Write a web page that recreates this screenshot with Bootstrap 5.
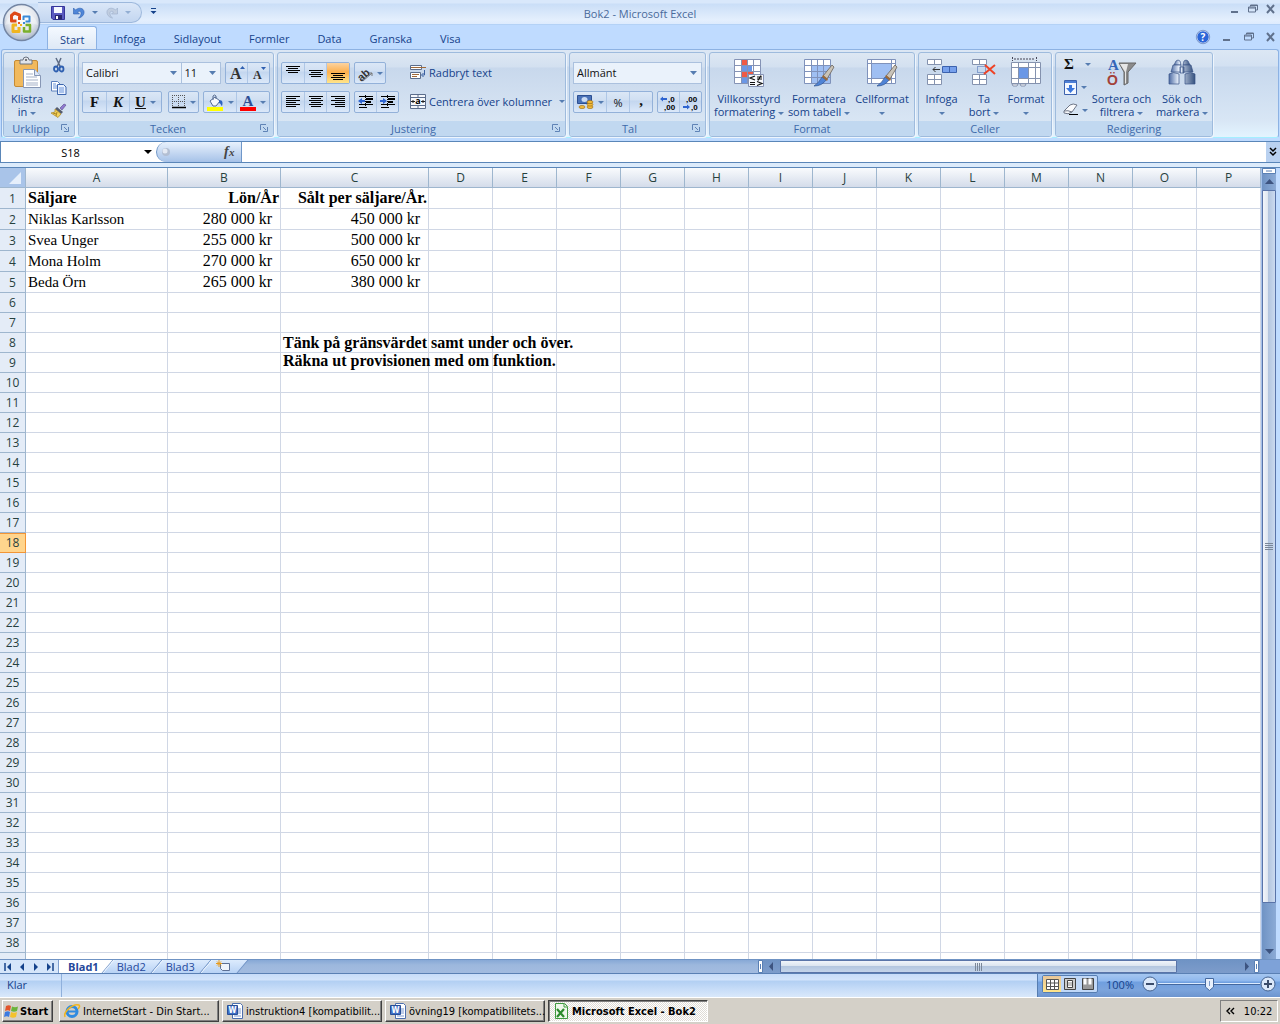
<!DOCTYPE html>
<html lang="sv">
<head>
<meta charset="utf-8">
<meta name="viewport" content="width=device-width, initial-scale=1">
<title>Bok2 - Microsoft Excel</title>
<link rel="stylesheet" href="https://cdn.jsdelivr.net/npm/bootstrap@5.3.0/dist/css/bootstrap.min.css">
<style>
:root{--ink:#15428b;--edge:#9ebbdd;--caret:#567db1;--line:#5a86b8}
body{height:100vh;overflow:hidden;background:#bfdbff;font:11px/13px "Open Sans","Noto Sans",sans-serif;color:var(--ink)}
button,input,select{font:inherit;color:inherit}
button{border:0;background:none;padding:0}
svg{display:block;flex:none;overflow:visible}
.caret{display:inline-block;width:0;height:0;border:3px solid transparent;border-bottom:0;border-top-color:var(--caret);vertical-align:middle;flex:none}
.titlebar{height:25px;background:linear-gradient(#d9e8fb 0,#d9e8fb 3px,#cadef7 4px,#e4effd 20px,#ddebfe);border-bottom:1px solid #b4d2f6}
.wtitle{color:#4a6a9a;top:7px}
.qat{height:21px;margin:2px 0 0 38px;padding:0 10px 0 13px;gap:7px;border:1px solid #9db8dc;border-left:0;border-radius:0 11px 11px 0;background:linear-gradient(#dbe7f8,#c3d6f0)}
.qat button{gap:6px}
.orb{left:2px;top:3px;z-index:3}
.tabstrip{height:25px}
.tabstrip .nav{padding-left:47px;gap:4px}
.tabstrip .nav-link{padding:0 12px;height:24px;line-height:25px;border:0;border-radius:3px 3px 0 0;color:var(--ink);font-size:11px}
.tabstrip .nav-link.active{background:linear-gradient(#f4f9ff,#dde8f5);border:1px solid #8db2e3;border-bottom:0;color:var(--ink)}
.ribbon{margin:0 1px;height:89px;padding:2px 1px 1px;gap:3px;border:1px solid #8db2e3;border-bottom:1px solid #a4efff;border-radius:3px;background:linear-gradient(#dce7f4 0,#d3e1f2 16px,#c7d8ed 17px,#d8e6f5 70px,#e3f4ff)}
.rgroup{border:1px solid var(--edge);border-radius:3px;background:linear-gradient(#dde7f3 0,#d3e0f0 14px,#c8d8ec 15px,#d9e6f4 70px);box-shadow:1px 1px 0 #eef5fd;height:85px}
.gbody{height:68px}
.glabel{height:15px;line-height:15px;background:#c1d8f0;color:#3e6aaa;text-align:center;position:relative;border-radius:0 0 2px 2px;font-size:11px}
.glabel.pr{padding-right:16px}
.launch{position:absolute;right:5px;top:3px}
.bigbtn{display:flex;flex-direction:column;align-items:center;padding-top:4px;color:var(--ink);white-space:nowrap}
.bigbtn svg{margin-bottom:3px}
.bset{display:flex;height:22px;border:1px solid #93b1d9;border-radius:2px;background:linear-gradient(#dbe7f6 0,#d0dff2 8px,#c3d6ef 9px,#dbe8f9)}
.bset button{flex:1;display:flex;align-items:center;justify-content:center;gap:4px;color:#111}
.bset button+button{border-left:1px solid #afc7e6}
.bset .fixw{flex:0 0 23px}
.bset .on{background:linear-gradient(#fbd3a0,#fdb04e 45%,#ffe58a)}
.serif{font:bold 15px/18px "Liberation Serif",serif}
.ubox.form-select{height:22px;line-height:14px;padding:2px 14px 2px 3px;border:1px solid #abc1de;border-radius:0;font-size:11px;color:#111;background-color:#eaf2fb;background-size:7px 4px;background-position:right 4px center;background-image:url("data:image/svg+xml,%3Csvg xmlns='http://www.w3.org/2000/svg' viewBox='0 0 7 4'%3E%3Cpath d='M0 0h7l-3.500 4z' fill='%23567db1'/%3E%3C/svg%3E")}
.rows{padding:9px 3px 0;gap:7px}
.txtbtn{display:flex;align-items:center;gap:3px;height:22px;padding-bottom:2px;color:var(--ink);white-space:nowrap}
.vsep{width:1px;height:55px;background:#9ebbdd;box-shadow:1px 0 0 #eaf2fb}
.fbar{height:22px;margin-top:3px;border:1px solid var(--line);border-right:0;background:#fff}
.fbar input{border:0;outline:0;background:#fff;height:20px;color:#000;min-width:0}
.fxbox{width:86px;border:1px solid #6f97c9;border-width:0 1px 0 1px;border-radius:11px 0 0 11px;background:linear-gradient(#e8f1fd,#a6c2e8);padding:0 4px 0 4px}
.gap-line{height:5px;background:#dcebfb;border-bottom:1px solid var(--line)}
.sheet{min-height:0;background:#fff}
.gridwrap{overflow:hidden;min-width:0}
.xl{table-layout:fixed;width:100%;border-collapse:separate;border-spacing:0;color:#000;font:16px/18px "Liberation Serif",serif}
.xl th,.xl td{padding:0 2px;height:20px;border:0 solid #d0d7e5;border-width:0 1px 1px 0;white-space:nowrap;overflow:visible}
.xl tr.tall th,.xl tr.tall td{height:21px}
.xl thead th{background:linear-gradient(#f9fbfd,#d4dcea);border-color:#9eb6ce}
.xl th{font:12px/17px "Open Sans",sans-serif;text-align:center;color:#27413e;padding:0}
.xl tbody th{background:#e4ecf7;border-color:#9eb6ce}
.xl tbody th.cur{background:#ffd58d;border-color:#f29536;box-shadow:inset 0 1px #f29536}
.xl .name{font-size:15px}
.xl .num{text-align:right;padding-right:8px}
.xl .hd{text-align:right;font-weight:bold;padding-right:1px}
.xl .up{vertical-align:top;line-height:16px}
.xl .corner{background:#a9c4e9}
.vbar{width:19px;background:linear-gradient(90deg,#a5c1ea 0,#a5c1ea 1px,#6f93c4 1px,#8cabd6 15px,#bfdbff 15px);padding:0 4px 0 1px}
.vthumb{border:1px solid #5a74a8;border-radius:1px;background:linear-gradient(90deg,#f2f6fb,#dfe6ef 40%,#b3c5de 45%,#cbdaf0);width:14px}
.btmbar{height:15px;border-top:1px solid #6f93c4;border-bottom:1px solid #5a80b4;background:linear-gradient(#86a8d6,#9db8dd 5px,#a2bbe0)}
.navs{background:#d5e5fa;width:59px;padding:0 4px;border-right:1px solid #7f9fcf}
.stab{position:relative;height:13px;line-height:13px;padding:0 11px 0 9px;z-index:1;color:#24479b}
.stab::before{content:"";position:absolute;z-index:-1;inset:0;background:linear-gradient(#dcebfd,#b8d2f5);border-right:1px solid #7193c6;box-shadow:inset 1px 0 #f4f9ff;transform:skewX(-40deg)}
.stab.act{font-weight:bold;padding-right:9px}
.stab.act::before{background:#fff;left:-8px}
.hbar{width:502px;background:linear-gradient(#6f93c4,#7d9ccb)}
.hthumb{border:1px solid #5a74a8;border-radius:1px;background:linear-gradient(#f0f4fa,#dbe4ef 45%,#b4c6df 50%,#c4d4ea)}
.status{height:23px;background:linear-gradient(#c7dcf9 0,#d3e4fb 6px,#b2cff3 7px,#c9def8 16px,#d9e8fb)}
.status>div{padding-bottom:3px}
.ready{width:62px;padding-left:7px;border-right:1px solid #8fb0dc}
.zoombar{background:linear-gradient(#a5c6f0,#8fb8ee 7px,#6f9fe0 8px,#7ca4dc 16px,#6d95cf);border-left:1px solid #567db1}
.zoombar input[type=range]{appearance:none;-webkit-appearance:none;width:102px;height:14px;background:linear-gradient(transparent 6px,#dcebff 6px,#dcebff 7px,#44689f 7px,#44689f 8px,transparent 8px);margin:0}
.zoombar input::-webkit-slider-thumb{-webkit-appearance:none;width:9px;height:13px;border:0;background:url("data:image/svg+xml,%3Csvg xmlns='http://www.w3.org/2000/svg' viewBox='0 0 9 13'%3E%3Cpath d='M.5.5h8V9l-4 3.500L.5 9z' fill='%23e6effc' stroke='%2344689f'/%3E%3Cpath d='M4.500 3v5' stroke='%237a98c8'/%3E%3C/svg%3E") 0 0/9px 13px no-repeat}
.viewset{border:1px solid #567db1;border-radius:2px;background:#c0d8f8}
.viewset button{width:18px;height:16px;display:flex;align-items:center;justify-content:center}
.viewset .on{background:linear-gradient(#e8c69a,#ffe58a)}
.taskbar{height:27px;background:#d4d0c8;border-top:1px solid #fff;padding:2px;gap:3px;font:11px/13px "DejaVu Sans Condensed","Liberation Sans",sans-serif;color:#000}
.tbtn{height:22px;display:flex;align-items:center;gap:3px;padding:0 2px 0 4px;border:1px solid;border-color:#fff #404040 #404040 #fff;box-shadow:inset -1px -1px #808080;background:#d4d0c8;color:#000;text-align:left}
.tbtn span{white-space:nowrap}
.tbtn.task{width:160px}
.tbtn.startbtn{width:51px;margin-right:3px;padding:0 1px;gap:1px}
.tbtn.down{border-color:#404040 #fff #fff #404040;box-shadow:inset 1px 1px #808080;background:repeating-conic-gradient(#fff 0 25%,#dfdcd6 0 50%) 0 0/2px 2px;font-weight:bold}
.clock{border:1px solid;border-color:#808080 #fff #fff #808080;width:58px;height:22px}
</style>
<script src="https://cdn.jsdelivr.net/npm/bootstrap@5.3.0/dist/js/bootstrap.bundle.min.js"></script>
</head>
<body class="d-flex flex-column m-0">

<button class="orb position-absolute" aria-label="Office-knappen">
<svg width="39" height="39" viewBox="0 0 39 39"><defs><radialGradient id="og" cx=".5" cy=".35" r=".65"><stop offset="0" stop-color="#fff"/><stop offset=".6" stop-color="#e3e7ee"/><stop offset="1" stop-color="#a9b4c6"/></radialGradient></defs><circle cx="19.500" cy="19.500" r="18" fill="url(#og)" stroke="#7385a3" stroke-width="1.500"/><path d="M3 22a17 17 0 0 1 33 0q-16-6-33 0z" fill="#fff" opacity=".35"/><g fill="none" stroke-linejoin="round"><path d="M17.500 17v-5l-5-2-3 2.500v5.500h5" stroke="#dd4817" stroke-width="3"/><path d="M21.500 17v-3.500h6v5h-4" stroke="#3b8ad8" stroke-width="2"/><path d="M15 22h-4v6.500h6V24" stroke="#f0b51e" stroke-width="3"/><path d="M23.500 22h4.500v6.500h-6V24" stroke="#7ab02c" stroke-width="2.500"/></g><path d="M16 19h2v2h-2z" fill="#e9561e"/><path d="M21 19h2v2h-2z" fill="#3b8ad8"/><path d="M18 21h2v2h-2z" fill="#f0b51e"/></svg></button>

<header class="titlebar d-flex align-items-start position-relative">
  <div class="qat d-flex align-items-center">
    <button aria-label="Spara"><svg width="14" height="14" viewBox="0 0 14 14"><path d="M.5.5h13v13H2l-1.500-1.500z" fill="#5a5ac0" stroke="#34349a"/><path d="M3 1h8v6H3z" fill="#f5f8ff"/><path d="M4 9h7v4.500H4z" fill="#26266e"/><path d="M5 10h2v3H5z" fill="#fff"/></svg></button>
    <button class="d-flex align-items-center" aria-label="Ångra"><svg width="14" height="14" viewBox="0 0 14 14"><path d="M1.500 2v6h6L5.500 6c2-1.500 4-.5 3.500 2-.3 2-1.500 3-2.500 4 3.500-.5 6-3.500 5.500-6.500C11.500 2 7 1 3.500 4z" fill="#4f86d8" stroke="#2f5fae" stroke-width=".6"/></svg><i class="caret"></i></button>
    <button class="d-flex align-items-center" aria-label="Upprepa"><svg width="14" height="14" viewBox="0 0 14 14"><path d="M12.500 2v6h-6l2-2C6.500 4.500 4.500 5.500 5 8c.3 2 1.500 3 2.500 4C4 11.500 1.500 8.500 2 5.500 2.500 2 7 1 10.500 4z" fill="#c0cde0" stroke="#9aadca" stroke-width=".6"/></svg><i class="caret opacity-50"></i></button>
  </div>
  <button class="ms-2 mt-2" aria-label="Anpassa verktygsfältet"><svg width="7" height="7" viewBox="0 0 7 7"><path d="M1 0h5v1H1zM.5 3h6l-3 3z" fill="#15428b"/></svg></button>
  <div class="wtitle position-absolute start-0 end-0 text-center pe-none">Bok2 - Microsoft Excel</div>
  <div class="ms-auto d-flex gap-2 pt-1 pe-1">
    <button aria-label="Minimera"><svg width="10" height="10"><path d="M1 7h7v2H1z" fill="#60718c"/></svg></button>
    <button aria-label="Återställ"><svg width="10" height="10"><path d="M2.500 2.500V1h7v5H8M.5 3h7v5h-7zM.5 4h7M2.500 1.500h7" fill="none" stroke="#60718c"/></svg></button>
    <button aria-label="Stäng"><svg width="10" height="10"><path d="M1 1l7 8M8 1L1 9" stroke="#60718c" stroke-width="2"/></svg></button>
  </div>
</header>

<div class="tabstrip d-flex justify-content-between">
  <nav class="nav nav-tabs border-0 align-items-end flex-nowrap">
    <a class="nav-link active" href="#">Start</a><a class="nav-link" href="#">Infoga</a><a class="nav-link" href="#">Sidlayout</a><a class="nav-link" href="#">Formler</a><a class="nav-link" href="#">Data</a><a class="nav-link" href="#">Granska</a><a class="nav-link" href="#">Visa</a>
  </nav>
  <div class="d-flex gap-2 align-items-center pe-1">
    <button aria-label="Hjälp"><svg width="14" height="14"><circle cx="7" cy="7" r="6.300" fill="#2b66d8" stroke="#fff"/><circle cx="7" cy="7" r="6.700" fill="none" stroke="#3a5fa8" stroke-width=".6"/><text x="7" y="11" font-size="10" font-weight="bold" text-anchor="middle" fill="#fff">?</text></svg></button>
    <button class="ms-1" aria-label="Minimera bok"><svg width="10" height="10"><path d="M1 7h7v2H1z" fill="#60718c"/></svg></button>
    <button class="ms-1" aria-label="Återställ bok"><svg width="10" height="10"><path d="M2.500 2.500V1h7v5H8M.5 3h7v5h-7zM.5 4h7M2.500 1.500h7" fill="none" stroke="#60718c"/></svg></button>
    <button class="ms-1" aria-label="Stäng bok"><svg width="10" height="10"><path d="M1 1l7 8M8 1L1 9" stroke="#60718c" stroke-width="2"/></svg></button>
  </div>
</div>

<main class="ribbon d-flex">
  <section class="rgroup" style="width:72px">
    <div class="gbody d-flex">
      <button class="bigbtn" style="width:46px"><svg width="32" height="32" viewBox="0 0 32 32"><rect x="3.500" y="3.500" width="23" height="26" rx="1.500" fill="#f1b95d" stroke="#c58b35"/><path d="M9 7V3h3a3 3 0 0 1 6 0h3v4z" fill="#dfe3ea" stroke="#6c7482"/><circle cx="15" cy="3" r="1" fill="#555"/><path d="M12.500 12.500h11l6 6v12h-17z" fill="#fff" stroke="#8797b5"/><path d="M23.500 12.500v6h6" fill="#dce6f6" stroke="#8797b5"/><path d="M15 17h7M15 20h11M15 23h12M15 26h12M15 28h12" stroke="#a5b1c7"/></svg><span>Klistra</span><span>in <i class="caret"></i></span></button>
      <div class="d-flex flex-column align-items-center gap-2 pt-1">
        <button aria-label="Klipp ut"><svg width="14" height="16" viewBox="0 0 14 16"><path d="M4 1l4.500 9M9 1L5 10" stroke="#5d6b85" stroke-width="1.500"/><ellipse cx="4" cy="12" rx="2" ry="2.500" fill="none" stroke="#2e5fb0" stroke-width="1.800"/><ellipse cx="9.500" cy="12" rx="2" ry="2.500" fill="none" stroke="#2e5fb0" stroke-width="1.800"/></svg></button>
        <button aria-label="Kopiera"><svg width="16" height="14" viewBox="0 0 16 14"><path d="M.5.5h6l2.500 2.500v7H.5z" fill="#fff" stroke="#5c80bd"/><path d="M6.500 3.500h6l2.500 2.500v7.500H6.500z" fill="#eaf2ff" stroke="#3c66ae"/><path d="M2 3h3M2 5h4M2 7h4M8 7h5M8 9h5M8 11h5" stroke="#6a94d8"/></svg></button>
        <button aria-label="Hämta format"><svg width="17" height="15" viewBox="0 0 17 15"><path d="M10 5l4-4 2 1-4 5z" fill="#8f7ad0" stroke="#5a4a8a" stroke-width=".6"/><path d="M7 4l6 5-2 2-6-5z" fill="#555d70"/><path d="M5 6l6 5-3 3.500L1 10l4-1z" fill="#f3d35e" stroke="#a98422" stroke-width=".7"/><path d="M3 10l3 1M7 9l-1 4" stroke="#a98422"/></svg></button>
      </div>
    </div>
    <div class="glabel pr">Urklipp<button class="launch" aria-label="Urklipp"><svg width="8" height="8"><path d="M.5 6V.5H6M3 3l3 3M7.500 3v4.500H3" fill="none" stroke="#5f83b6"/></svg></button></div>
  </section>

  <section class="rgroup" style="width:196px">
    <div class="gbody rows d-flex flex-column">
      <div class="d-flex gap-1"><div class="d-flex flex-fill"><select class="form-select ubox" aria-label="Teckensnitt"><option>Calibri</option></select><select class="form-select ubox border-start-0" aria-label="Storlek" style="width:50px"><option>11</option></select></div>
        <div class="bset" style="width:45px"><button aria-label="Öka teckenstorlek"><svg width="18" height="18"><text x="2" y="15" font-family="Liberation Serif" font-weight="bold" font-size="16" fill="#333">A</text><path d="M12 5h5l-2.500-3z" fill="#2e5fb0"/></svg></button><button aria-label="Minska teckenstorlek"><svg width="18" height="18"><text x="3" y="15" font-family="Liberation Serif" font-weight="bold" font-size="12" fill="#333">A</text><path d="M11 3h5l-2.500 3z" fill="#2e5fb0"/></svg></button></div></div>
      <div class="d-flex justify-content-between"><div class="bset" style="width:80px"><button class="serif fixw">F</button><button class="serif fst-italic fixw">K</button><button class="serif"><u>U</u><i class="caret"></i></button></div>
        <div class="d-flex gap-1"><div class="bset" style="width:31px"><button aria-label="Kantlinjer"><svg width="14" height="14"><path d="M.5 0v12M6.500 0v12M12.500 0v12M0 .5h13M0 6.500h13" stroke="#555" stroke-dasharray="1 1" fill="none"/><path d="M0 12.500h14" stroke="#000" stroke-width="1.500"/></svg><i class="caret"></i></button></div>
        <div class="bset" style="width:67px"><button aria-label="Fyllningsfärg"><svg width="17" height="17" viewBox="0 0 17 17"><path d="M3 7l5-4 5 4-4 5H6z" fill="#f4f7fc" stroke="#556b91"/><path d="M6 6V2q1.500-2 3 0v3" fill="none" stroke="#556b91"/><path d="M12 6c4 0 4 3 3 6-1 0-1-3-3-3z" fill="#2e64c0"/><path d="M0 13h16v4H0z" fill="#ff0"/></svg><i class="caret"></i></button><button aria-label="Teckenfärg"><svg width="16" height="17"><text x="8" y="12" font-family="Liberation Serif" font-weight="bold" font-size="15" text-anchor="middle" fill="#2e4f96">A</text><path d="M0 13h16v4H0z" fill="#f00"/></svg><i class="caret"></i></button></div></div></div>
    </div>
    <div class="glabel pr">Tecken<button class="launch" aria-label="Tecken"><svg width="8" height="8"><path d="M.5 6V.5H6M3 3l3 3M7.500 3v4.500H3" fill="none" stroke="#5f83b6"/></svg></button></div>
  </section>

  <section class="rgroup" style="width:289px">
    <div class="gbody d-flex">
      <div class="rows d-flex flex-column">
        <div class="d-flex gap-1"><div class="bset" style="width:69px"><button aria-label="Överkant"><svg width="14" height="14"><path d="M0 .5h14M2 2.500h10M0 4.500h14M2 6.500h10" stroke="#000"/></svg></button><button aria-label="Centrera lodrätt"><svg width="14" height="14"><path d="M0 4.500h14M2 6.500h10M0 8.500h14M2 10.500h10" stroke="#000"/></svg></button><button class="on" aria-label="Nederkant"><svg width="14" height="14"><path d="M0 7.500h14M2 9.500h10M0 11.500h14M2 13.500h10" stroke="#000"/></svg></button></div>
          <div class="bset" style="width:32px"><button aria-label="Orientering"><svg width="15" height="15"><text x="-1" y="13" transform="rotate(-42 5 9)" font-size="11" font-weight="bold" font-family="Liberation Sans" fill="#333">ab</text><path d="M5 15l9-8M11 7h3v3" stroke="#777" fill="none"/></svg><i class="caret"></i></button></div></div>
        <div class="d-flex gap-1"><div class="bset" style="width:69px"><button aria-label="Vänster"><svg width="14" height="12"><path d="M0 .5h14M0 2.500h10M0 4.500h14M0 6.500h10M0 8.500h14M0 10.500h10" stroke="#000"/></svg></button><button aria-label="Centrera"><svg width="14" height="12"><path d="M0 .5h14M2 2.500h10M0 4.500h14M2 6.500h10M0 8.500h14M2 10.500h10" stroke="#000"/></svg></button><button aria-label="Höger"><svg width="14" height="12"><path d="M0 .5h14M4 2.500h10M0 4.500h14M4 6.500h10M0 8.500h14M4 10.500h10" stroke="#000"/></svg></button></div>
          <div class="bset" style="width:45px"><button aria-label="Minska indrag"><svg width="16" height="14"><path d="M1 1.500h14M8 4h7M8 7h5M1 9.500h14M1 12.500h8" stroke="#000"/><path d="M8 4h7M8 7h5" stroke="#000" stroke-width="2"/><path d="M7.500 0v14" stroke="#000" stroke-dasharray="1 1"/><path d="M0 6l4-3v2h3v2H4v2z" fill="#2e64d0"/></svg></button><button aria-label="Öka indrag"><svg width="16" height="14"><path d="M1 1.500h14M1 9.500h14M1 12.500h8" stroke="#000"/><path d="M8 4h7M8 7h5" stroke="#000" stroke-width="2"/><path d="M7.500 0v14" stroke="#000" stroke-dasharray="1 1"/><path d="M7 6L3 3v2H0v2h3v2z" fill="#2e64d0"/></svg></button></div></div>
      </div>
      <div class="vsep mt-2 ms-auto"></div>
      <div class="rows d-flex flex-column ps-2">
        <button class="txtbtn"><svg width="16" height="16"><path d="M.5 1.500h11v4H.5zM.5 8.500h10v6H.5z" fill="#fff" stroke="#5b6d8b"/><path d="M1 3.500h15M2 10.500h7M2 12.500h5" stroke="#a06a3a"/><path d="M14.500 6v5h-2m1-2l-2 2 2 2" fill="none" stroke="#3a5fa0"/></svg>Radbryt text</button>
        <button class="txtbtn"><svg width="16" height="15"><path d="M.5.5h15v14H.5zM8 0v3M8 11v4M0 3.500h16M0 11.500h16" fill="#f5f8fd" stroke="#5b6d8b"/><text x="8" y="10" font-size="9" font-weight="bold" text-anchor="middle" fill="#000">a</text><path d="M1 7.500h4M11 7.500h4M3 6v3M13 6v3" stroke="#222"/></svg>Centrera över kolumner<i class="caret ms-1"></i></button>
      </div>
    </div>
    <div class="glabel pr">Justering<button class="launch" aria-label="Justering"><svg width="8" height="8"><path d="M.5 6V.5H6M3 3l3 3M7.500 3v4.500H3" fill="none" stroke="#5f83b6"/></svg></button></div>
  </section>

  <section class="rgroup" style="width:137px">
    <div class="gbody rows d-flex flex-column">
      <select class="form-select ubox" aria-label="Talformat"><option>Allmänt</option></select>
      <div class="d-flex gap-1"><div class="bset flex-fill"><button aria-label="Valuta"><svg width="17" height="16"><path d="M.5 1.500h14v8H.5z" fill="#4a72b8" stroke="#2c4f92"/><ellipse cx="7.500" cy="5.500" rx="3" ry="2.500" fill="#c9daf4"/><g fill="#f0b93a" stroke="#9a6a10" stroke-width=".6"><ellipse cx="13" cy="13" rx="3" ry="1.600"/><ellipse cx="13" cy="10.500" rx="3" ry="1.600"/><ellipse cx="13" cy="8" rx="3" ry="1.600"/><ellipse cx="5" cy="13" rx="3" ry="1.600"/></g></svg><i class="caret"></i></button><button class="fixw">%</button><button class="fixw serif pb-1">,</button></div>
      <div class="bset" style="width:45px"><button aria-label="Öka decimal"><svg width="18" height="17" font-size="8" font-weight="bold" font-family="Liberation Sans"><text x="8" y="8">,0</text><text x="4" y="16">,00</text><path d="M0 5l3-2.500V4h4v2H3v1.500z" fill="#2e64d0"/></svg></button><button aria-label="Minska decimal"><svg width="18" height="17" font-size="8" font-weight="bold" font-family="Liberation Sans"><text x="4" y="8">,00</text><text x="9" y="16">,0</text><path d="M8 13l-3-2.500V12H1v2h4v1.500z" fill="#2e64d0"/></svg></button></div></div>
    </div>
    <div class="glabel pr">Tal<button class="launch" aria-label="Tal"><svg width="8" height="8"><path d="M.5 6V.5H6M3 3l3 3M7.500 3v4.500H3" fill="none" stroke="#5f83b6"/></svg></button></div>
  </section>

  <section class="rgroup" style="width:206px">
    <div class="gbody d-flex">
      <button class="bigbtn" style="width:78px"><svg width="32" height="32"><path d="M1.500 2.500h26v24h-26z" fill="#fff"/><path d="M8 2h6v6H8zM8 14h12v6H8z" fill="#ee5a45"/><path d="M8 8h11v6H8zM8 20h6v6H8z" fill="#6a97e6"/><path d="M1.500 2.500h26v24h-26zM8.500 2v24M14.500 2v24M20.500 2v24M2 8.500h26M2 14.500h26M2 20.500h26" fill="none" stroke="#8593b5"/><path d="M15.500 17.500h15v12h-15z" fill="#f7f9fd" stroke="#8593b5"/><path d="M22 19l-5 2 5 2M17 25.500h5M17 27.500h5M24 20h5M24 22h5M28 18.500l-3 5M24 24.500l5 2-5 2" fill="none" stroke="#111" stroke-width="1.200"/></svg><span>Villkorsstyrd</span><span>formatering <i class="caret"></i></span></button>
      <button class="bigbtn" style="width:62px"><svg width="32" height="32"><path d="M1.500 2.500h26v24h-26z" fill="#fff"/><path d="M8 8h20v18H8z" fill="#9fbff3"/><path d="M1.500 2.500h26v24h-26zM8.500 2v24M14.500 2v24M20.500 2v24M1 8.500h27M1 14.500h27M1 20.500h27" fill="none" stroke="#7f92bb"/><path d="M29 8l2 2-7 12-4-3z" fill="#c9c3b8" stroke="#6a6259" stroke-width=".8"/><path d="M19 20l4 3q-4 6-12 6 5-3 8-9z" fill="#4f83d6" stroke="#31548f" stroke-width=".7"/><path d="M20 18l5 4-1 2-5-4z" fill="#9a6a3a"/></svg><span>Formatera</span><span>som tabell <i class="caret"></i></span></button>
      <button class="bigbtn flex-fill"><svg width="32" height="32"><path d="M1.500 2.500h28v24h-28z" fill="#fff"/><path d="M6 7h19v14H6z" fill="#9fbff3"/><path d="M1.500 2.500h28v24h-28zM5.500 2v24M25.500 2v24M1 6.500h28M1 21.500h28" fill="none" stroke="#7f92bb"/><path d="M29 8l2 2-7 12-4-3z" fill="#c9c3b8" stroke="#6a6259" stroke-width=".8"/><path d="M19 20l4 3q-4 6-12 6 5-3 8-9z" fill="#4f83d6" stroke="#31548f" stroke-width=".7"/><path d="M20 18l5 4-1 2-5-4z" fill="#9a6a3a"/></svg><span>Cellformat</span><span><i class="caret"></i></span></button>
    </div>
    <div class="glabel">Format</div>
  </section>

  <section class="rgroup" style="width:134px">
    <div class="gbody d-flex">
      <button class="bigbtn" style="width:45px"><svg width="32" height="32"><path d="M1.500 2.500h14v5h-14zM8.500 2v5M1.500 17.500h14v10h-14zM8.500 17v10M1 22.500h14" fill="#fff" stroke="#8492ae"/><path d="M16.500 9.500h14v6h-14z" fill="#76a0ec" stroke="#3c62ae"/><path d="M23.500 9v6" stroke="#3c62ae"/><path d="M7 12.500h7M9.500 10L7 12.500 9.500 15" stroke="#333" fill="none"/></svg><span>Infoga</span><span><i class="caret"></i></span></button>
      <button class="bigbtn" style="width:40px"><svg width="32" height="32"><path d="M4.500 2.500h14v5h-14zM11.500 2v5M4.500 17.500h14v10h-14zM11.500 17v10M4 22.500h14" fill="#fff" stroke="#8492ae"/><path d="M9.500 9.500h8v6h-8z" fill="none" stroke="#3c62ae" stroke-dasharray="1 1"/><path d="M17 8l10 9M27 8L16 17" stroke="#ee4326" stroke-width="2"/></svg><span>Ta</span><span>bort <i class="caret"></i></span></button>
      <button class="bigbtn" style="width:44px"><svg width="32" height="32"><path d="M1.500 5.500h29v21h-29z" fill="#fff"/><path d="M9 11h9v10H9z" fill="#6a97e6"/><path d="M1.500 5.500h29v21h-29zM8.500 5v21M18.500 5v21M25.500 5v21M1 10.500h29M1 21.500h29" fill="none" stroke="#8492ae"/><path d="M2.500 0v4M26.500 0v4M4 2h21" stroke="#445" stroke-dasharray="2 1"/><path d="M2 27h6l-1 2H3zM10 27h6l-1 2h-4z" fill="#fff" stroke="#8492ae"/></svg><span>Format</span><span><i class="caret"></i></span></button>
    </div>
    <div class="glabel">Celler</div>
  </section>

  <section class="rgroup" style="width:158px">
    <div class="gbody d-flex">
      <div class="d-flex flex-column gap-2 pt-1 ps-2">
        <button class="d-flex align-items-center gap-2" aria-label="Summa"><svg width="13" height="15"><text x="0" y="12" font-family="Liberation Serif" font-weight="bold" font-size="15" fill="#111">Σ</text></svg><i class="caret"></i></button>
        <button class="d-flex align-items-center gap-1" aria-label="Fyll"><svg width="13" height="15"><path d="M.5.5h12v14H.5z" fill="#f4f8ff" stroke="#3c62ae"/><path d="M1 1h11v2H1z" fill="#4d7fd6"/><path d="M5 5h3v3h3l-4.500 5L2 8h3z" fill="#3b76dc"/></svg><i class="caret"></i></button>
        <button class="d-flex align-items-center gap-1" aria-label="Radera"><svg width="14" height="14"><path d="M0 8l6-6q3-2 7 0L8 9q-4 3-8 1z" fill="#fafbfd" stroke="#6e7687"/><path d="M0 8q4-1 8 1" fill="none" stroke="#6e7687"/><path d="M5 11.500h9" stroke="#000"/></svg><i class="caret"></i></button>
      </div>
      <button class="bigbtn flex-fill"><svg width="32" height="32"><text x="2" y="13" font-family="Liberation Serif" font-weight="bold" font-size="15" fill="#3566b8">A</text><text x="1" y="28" font-family="Liberation Sans" font-weight="bold" font-size="14" fill="#a34038">Ö</text><path d="M13 6h17l-8 9v11l-4 2V15z" fill="#8b8b8b" stroke="#666"/><path d="M14 7h8l-2 8v11l-1 1V15z" fill="#e6e6e6"/></svg><span>Sortera och</span><span>filtrera <i class="caret"></i></span></button>
      <button class="bigbtn" style="width:60px"><svg width="32" height="32"><defs><linearGradient id="bn"><stop offset="0" stop-color="#4d6ba3"/><stop offset=".35" stop-color="#e3ecf9"/><stop offset="1" stop-color="#35517f"/></linearGradient></defs><g stroke="#3b5586" stroke-width=".7" fill="url(#bn)"><path d="M10 4q2-2 4 0l1 4H8zM18 4q2-2 4 0l2 4h-7z"/><path d="M7 8h8v7H5zM17 8h8l2 7H17z"/><path d="M14 10h4v6h-4z"/><path d="M3 17q4-3 10 0v10H3zM19 17q6-3 10 0v10H19z"/></g></svg><span>Sök och</span><span>markera <i class="caret"></i></span></button>
    </div>
    <div class="glabel">Redigering</div>
  </section>
</main>

<div class="fbar d-flex align-items-center">
  <input class="text-center ps-0 pe-1" style="width:143px" value="S18" aria-label="Namnruta">
  <svg width="8" height="5"><path d="M0 0h8L4 4z" fill="#000"/></svg>
  <div class="fxbox d-flex align-items-center justify-content-between h-100 ms-1"><svg width="10" height="10"><circle cx="5" cy="5" r="4" fill="#b3bfd3"/><circle cx="4" cy="4" r="2.500" fill="#e4eaf4"/></svg><svg width="14" height="16"><text x="1" y="12" font-family="Liberation Serif" font-style="italic" font-weight="bold" font-size="14" fill="#444">f</text><text x="6" y="12" font-family="Liberation Serif" font-style="italic" font-weight="bold" font-size="11" fill="#444">x</text></svg></div>
  <input class="flex-fill" aria-label="Formelfält">
  <button class="d-flex align-items-center justify-content-center h-100" style="width:14px;background:#b9d1f0" aria-label="Visa formelfält"><svg width="8" height="10"><path d="M1 1l3 3 3-3M1 5l3 3 3-3" stroke="#000" stroke-width="1.500" fill="none"/></svg></button>
</div>
<div class="gap-line"></div>

<div class="sheet d-flex flex-fill">
  <div class="gridwrap flex-fill">
    <table class="xl"><colgroup id="cols"></colgroup><thead><tr id="heads"></tr></thead><tbody id="cells"></tbody></table>
  </div>
  <div class="vbar d-flex flex-column align-items-center">
    <svg width="14" height="6"><path d="M.5.5h13v5H.5z" fill="#fff" stroke="#5a80b4"/><path d="M4 3h6" stroke="#5a80b4"/></svg>
    <svg width="14" height="16"><path d="M3 10h9L7.500 5z" fill="#3d5480"/></svg>
    <div class="vthumb d-flex align-items-center justify-content-center flex-fill"><svg width="8" height="9"><path d="M0 1.500h8M0 3.500h8M0 5.500h8M0 7.500h8" stroke="#7b8798"/></svg></div>
    <svg width="14" height="56"><path d="M3 46h9l-4.500 5z" fill="#3d5480"/></svg>
  </div>
</div>

<div class="btmbar d-flex">
  <div class="navs d-flex align-items-center justify-content-between">
    <button aria-label="Första bladet"><svg width="8" height="8"><path d="M1 0v8" stroke="#15428b" stroke-width="1.500"/><path d="M7 0v8L3 4z" fill="#15428b"/></svg></button><button aria-label="Föregående blad"><svg width="6" height="8"><path d="M5 0v8L1 4z" fill="#15428b"/></svg></button><button aria-label="Nästa blad"><svg width="6" height="8"><path d="M1 0v8l4-4z" fill="#15428b"/></svg></button><button aria-label="Sista bladet"><svg width="8" height="8"><path d="M7 0v8" stroke="#15428b" stroke-width="1.500"/><path d="M1 0v8l4-4z" fill="#15428b"/></svg></button>
  </div>
  <div class="d-flex overflow-hidden pe-3">
    <button class="stab act">Blad1</button><button class="stab">Blad2</button><button class="stab">Blad3</button><button class="stab" aria-label="Infoga kalkylblad"><svg width="17" height="13"><path d="M5.500 3.500h9v7h-7l-2-2z" fill="#eef4fd" stroke="#5c6f94"/><path d="M4 0v7M1 3.500h6M2 1.500l4 4M6 1.500l-4 4" stroke="#e89b1c"/></svg></button>
  </div>
  <div class="hbar ms-auto d-flex align-items-center">
    <svg width="22" height="13"><path d="M.5.5h4v12h-4z" fill="#fff" stroke="#5a80b4"/><path d="M2.500 4v5" stroke="#5a80b4"/><path d="M15 2v9l-4-4.500z" fill="#3d5480"/></svg>
    <div class="hthumb h-100 d-flex align-items-center justify-content-center" style="width:397px"><svg width="9" height="8"><path d="M1.500 0v8M3.500 0v8M5.500 0v8M7.500 0v8" stroke="#7b8798"/></svg></div>
    <svg class="ms-auto" width="16" height="13"><path d="M1 2v9l4-4.500z" fill="#3d5480"/><path d="M10.500.5h4v12h-4z" fill="#fff" stroke="#5a80b4"/><path d="M12.500 4v5" stroke="#5a80b4"/></svg>
  </div>
  <div style="width:20px;background:#7ea2d8"></div>
</div>

<div class="status d-flex">
  <div class="ready d-flex align-items-center">Klar</div>
  <div class="zoombar ms-auto d-flex align-items-center ps-1 pe-1">
    <div class="viewset d-flex"><button class="on" aria-label="Normal"><svg width="13" height="11"><path d="M.5.5h12v10H.5zM4.500 0v11M8.500 0v11M0 4h13M0 7.500h13" fill="#fff" stroke="#555"/></svg></button><button aria-label="Sidlayout"><svg width="12" height="12"><path d="M.5.5h11v11H.5z" fill="#ccc" stroke="#444"/><path d="M3.500 2.500h5v7h-5z" fill="#fff" stroke="#444"/><path d="M4 5h4M4 7h4" stroke="#888"/></svg></button><button aria-label="Sidbrytning"><svg width="12" height="12"><path d="M.5.5h11v11H.5z" fill="#999" stroke="#444"/><path d="M1.500.5h3v6h-3zM6.500.5h3v6h-3z" fill="#fff"/></svg></button></div>
    <button class="ms-2">100%</button>
    <button class="ms-2" aria-label="Zooma ut"><svg width="16" height="16"><circle cx="8" cy="8" r="7" fill="#dbe8fa" stroke="#44628f"/><path d="M4 8h8" stroke="#3b4c6b" stroke-width="2"/></svg></button>
    <input type="range" min="0" max="100" value="50" aria-label="Zoom">
    <button aria-label="Zooma in"><svg width="16" height="16"><circle cx="8" cy="8" r="7" fill="#dbe8fa" stroke="#44628f"/><path d="M4 8h8M8 4v8" stroke="#3b4c6b" stroke-width="2"/></svg></button>
  </div>
</div>

<footer class="taskbar d-flex align-items-start">
  <button class="tbtn startbtn fw-bold"><svg width="15" height="14"><path d="M2 2q3-1.500 5 0L6 7Q4 5.500 1 7z" fill="#e2542a"/><path d="M8 2.500q3 1.500 6 0L13 7q-3 1.500-6 0z" fill="#6ab43a"/><path d="M1 8q3-1.500 5 0l-1 5q-2-1.500-5 0z" fill="#3c7be0"/><path d="M7 8q3 1.500 6 0l-1 5q-3 1.500-6 0z" fill="#f4c22c"/></svg><span>Start</span></button>
  <button class="tbtn task"><svg width="16" height="16"><circle cx="8" cy="8.500" r="5" fill="none" stroke="#2f8be0" stroke-width="3"/><path d="M4 8.500h9" stroke="#2f8be0" stroke-width="2"/><path d="M1 14C-1 9 9 0 15 2c1 1 0 3-1 4" fill="none" stroke="#f1b51f" stroke-width="1.500"/></svg><span>InternetStart - Din Start...</span></button>
  <button class="tbtn task"><svg width="16" height="16"><path d="M5.500.5h8l2 2v13h-10z" fill="#fff" stroke="#4d6fae"/><path d="M11 6h3M11 8h3M11 10h3M7 13h7" stroke="#7d9ad0"/><path d="M.5 2.500h10v9H.5z" fill="#3f6fc4" stroke="#274f98"/><text x="5.500" y="10" font-size="8" font-weight="bold" text-anchor="middle" fill="#fff">W</text></svg><span>instruktion4 [kompatibilit...</span></button>
  <button class="tbtn task"><svg width="16" height="16"><path d="M5.500.5h8l2 2v13h-10z" fill="#fff" stroke="#4d6fae"/><path d="M11 6h3M11 8h3M11 10h3M7 13h7" stroke="#7d9ad0"/><path d="M.5 2.500h10v9H.5z" fill="#3f6fc4" stroke="#274f98"/><text x="5.500" y="10" font-size="8" font-weight="bold" text-anchor="middle" fill="#fff">W</text></svg><span>övning19 [kompatibilitets...</span></button>
  <button class="tbtn task down"><svg width="16" height="16"><path d="M2.500.5h9l3 3v12h-12z" fill="#eef7ea" stroke="#3f9a3f"/><path d="M11 1v3h3" fill="none" stroke="#3f9a3f"/><path d="M4 6l7 8M11 6l-7 8" stroke="#2c8a2c" stroke-width="2.200"/></svg><span>Microsoft Excel - Bok2</span></button>
  <div class="clock ms-auto d-flex align-items-center justify-content-around"><svg width="9" height="7"><path d="M4 0L1 3l3 3M8 0L5 3l3 3" fill="none" stroke="#000" stroke-width="1.400"/></svg><span>10:22</span></div>
</footer>

<script>
const letters = "ABCDEFGHIJKLMNOP".split("");
const widths = {A: 142, B: 113, C: 148};
cols.innerHTML = '<col style="width:26px">' + letters.map(c => c === "P" ? "<col>" : `<col style="width:${widths[c] || 64}px">`).join("");
heads.innerHTML = '<th class="corner" aria-label="Markera allt"><svg width="25" height="19"><path d="M21 4v12H9z" fill="#e6effb"/></svg></th>' + letters.map(c => `<th scope="col">${c}</th>`).join("");
const data = {
  A1: ["Säljare", "fw-bold"], B1: ["Lön/År", "hd"], C1: ["Sålt per säljare/År.", "hd"],
  A2: ["Niklas Karlsson", "name"], B2: ["280 000 kr", "num"], C2: ["450 000 kr", "num"],
  A3: ["Svea Unger", "name"], B3: ["255 000 kr", "num"], C3: ["500 000 kr", "num"],
  A4: ["Mona Holm", "name"], B4: ["270 000 kr", "num"], C4: ["650 000 kr", "num"],
  A5: ["Beda Örn", "name"], B5: ["265 000 kr", "num"], C5: ["380 000 kr", "num"],
  C8: ["Tänk på gränsvärdet samt under och över.", "fw-bold"],
  C9: ["Räkna ut provisionen med om funktion.", "fw-bold up"]
};
let html = "";
for (let r = 1; r <= 39; r++) {
  html += `<tr class="${r < 6 ? "tall" : ""}"><th scope="row" class="${r === 18 ? "cur" : ""}">${r < 39 ? r : ""}</th>` +
    letters.map(c => { const d = data[c + r] || ["", ""]; return `<td class="${d[1]}">${d[0]}</td>`; }).join("") + "</tr>";
}
cells.innerHTML = html;
</script>
</body>
</html>
